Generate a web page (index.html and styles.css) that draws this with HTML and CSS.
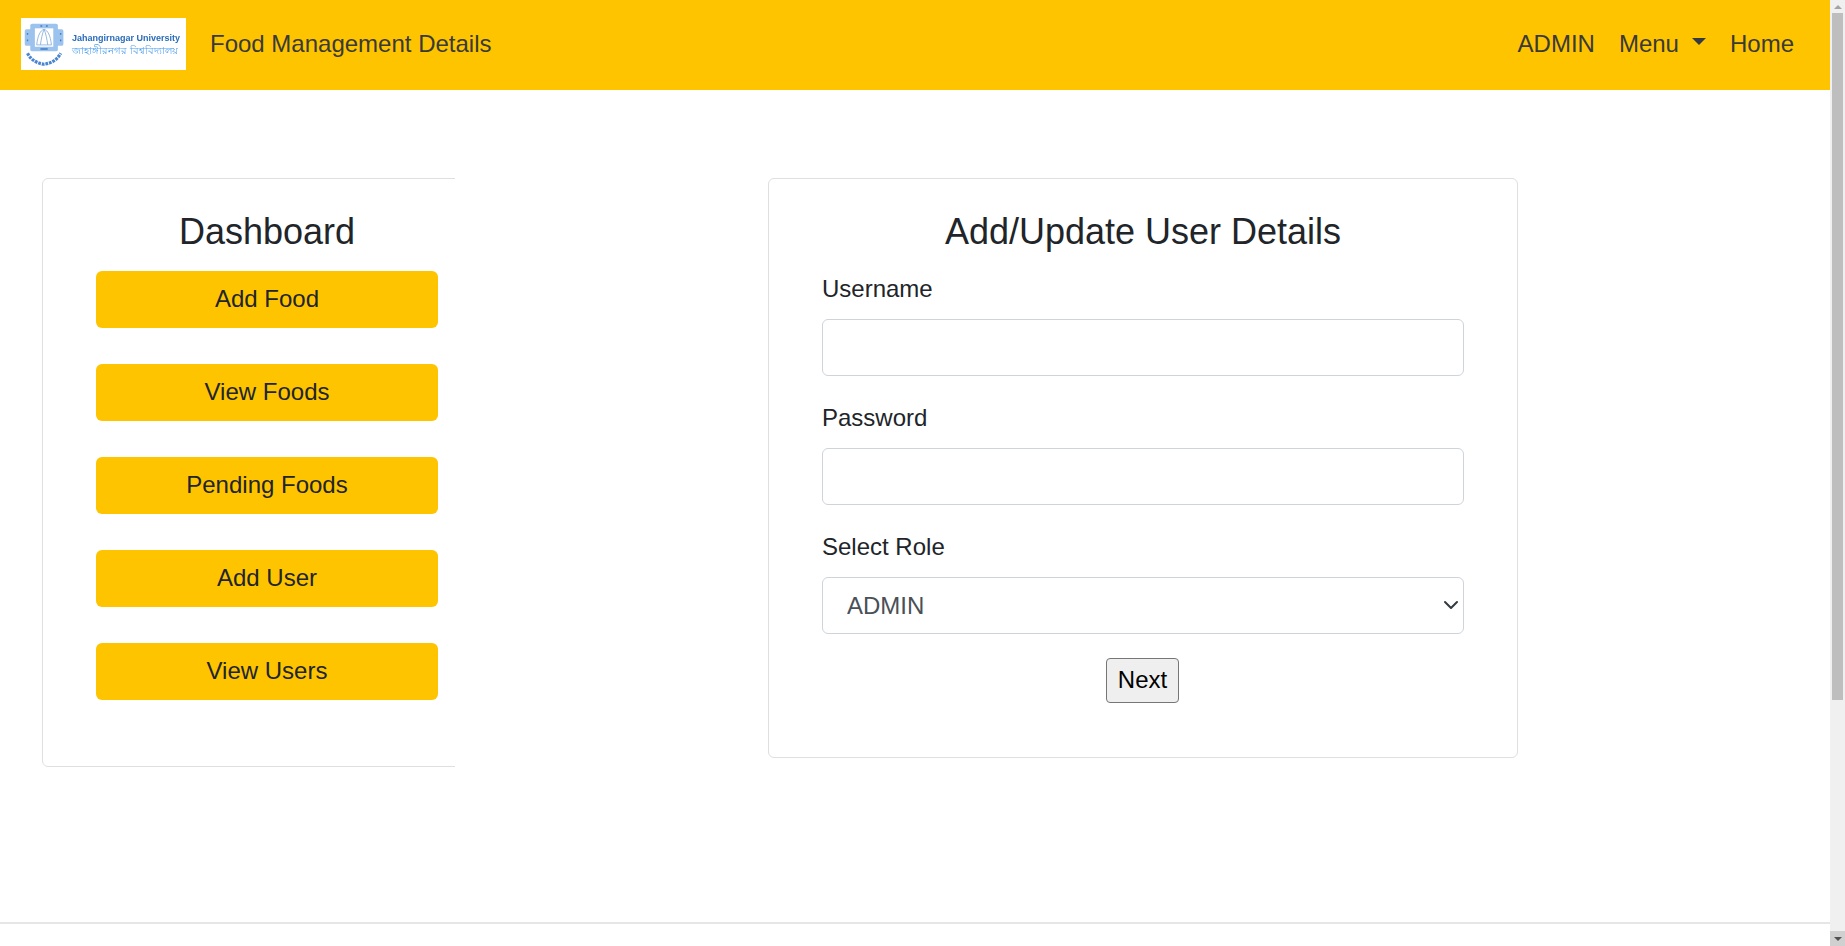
FILE: index.html
```html
<!DOCTYPE html>
<html>
<head>
    <meta charset="utf-8">
    <title>Food Management Details</title>
    <link rel="stylesheet" href="styles.css">
</head>
<body>
    <div class="page">
        <nav class="navbar">
            <div class="logo">
                <svg class="seal" width="46" height="46" viewBox="0 0 50 50">
                    <rect x="9" y="3" width="30" height="30" rx="2" fill="#9cc3ee"/>
                    <rect x="3" y="9" width="42" height="18" rx="2" fill="#9cc3ee"/>
                    <rect x="14" y="8" width="20" height="20" fill="#fff"/>
                    <path d="M16 26 C17 16 20 10 24 9 C28 10 31 16 32 26 M20 26 C21 19 22 14 24 9 C26 14 27 19 28 26 M16 26 H32" fill="none" stroke="#8fb3dd" stroke-width="1"/>
                    <path d="M6 13 v2 M6 20 v2 M42 13 v2 M42 20 v2 M20 5.500 h2 M26 5.500 h2 M20 30.500 h8" stroke="#3f7cc8" stroke-width="1.500"/>
                    <path d="M6 35 C10 43 17 46 24 47 C31 46 38 43 42 35" fill="none" stroke="#4a86d0" stroke-width="3.500" stroke-dasharray="3 1"/>
                </svg>
                <div class="logo-text">
                    <span class="logo-en">Jahangirnagar University</span>
                    <span class="logo-bn">জাহাঙ্গীরনগর বিশ্ববিদ্যালয়</span>
                </div>
            </div>
            <a class="brand" href="#">Food Management Details</a>
            <ul class="nav-links">
                <li><a href="#">ADMIN</a></li>
                <li><a href="#" class="dropdown-toggle">Menu</a></li>
                <li><a href="#">Home</a></li>
            </ul>
        </nav>

        <main class="content">
            <div class="sidebar">
                <div class="card side-card">
                    <h2>Dashboard</h2>
                    <a class="side-btn" href="#">Add Food</a>
                    <a class="side-btn" href="#">View Foods</a>
                    <a class="side-btn" href="#">Pending Foods</a>
                    <a class="side-btn" href="#">Add User</a>
                    <a class="side-btn" href="#">View Users</a>
                </div>
            </div>

            <form class="card form-card">
                <h2>Add/Update User Details</h2>
                <label for="username">Username</label>
                <input type="text" id="username" class="field">
                <label for="password">Password</label>
                <input type="password" id="password" class="field">
                <label for="role">Select Role</label>
                <div class="select-wrap">
                    <select id="role" class="field">
                        <option>ADMIN</option>
                    </select>
                    <svg class="chevron" width="16" height="16" viewBox="0 0 16 16">
                        <path d="M2 5l6 6 6-6" fill="none" stroke="#343a40" stroke-width="2" stroke-linecap="round" stroke-linejoin="round"/>
                    </svg>
                </div>
                <div class="form-actions">
                    <button type="button" class="next-btn">Next</button>
                </div>
            </form>
        </main>

        <footer class="footer"></footer>
    </div>

    <div class="scrollbar">
        <div class="scroll-arrow"><span class="arrow-up"></span></div>
        <div class="scroll-track"><div class="scroll-thumb"></div></div>
        <div class="scroll-arrow scroll-arrow-down"><span class="arrow-down"></span></div>
    </div>
</body>
</html>
```

FILE: styles.css
```css
* {
    box-sizing: border-box;
}

html, body {
    height: 100%;
}

body {
    margin: 0;
    display: flex;
    height: 946px;
    overflow: hidden;
    background: white;
    color: #212529;
    font-family: 'Liberation Sans', Arial, sans-serif;
    font-size: 24px;
    line-height: 1.5;
}

.page {
    flex: 1;
    display: flex;
    flex-direction: column;
    min-width: 0;
}

.navbar {
    height: 90px;
    flex-shrink: 0;
    display: flex;
    align-items: center;
    background: #ffc400;
    padding: 0 36px 2px 21px;
}

.logo {
    width: 165px;
    height: 52px;
    margin-right: 24px;
    background: white;
    display: flex;
    align-items: center;
    padding-left: 1px;
    overflow: hidden;
}

.seal {
    flex-shrink: 0;
    filter: blur(0.5px);
}

.logo-text {
    display: flex;
    flex-direction: column;
    margin-left: 4px;
    white-space: nowrap;
    filter: blur(0.4px);
}

.logo-en {
    font-size: 9px;
    line-height: 12px;
    font-weight: bold;
    color: #2a6cb9;
}

.logo-bn {
    font-family: 'Noto Sans', 'Liberation Sans', sans-serif;
    font-size: 10px;
    line-height: 13px;
    color: #4f9fec;
}

.brand {
    color: #3a3a36;
    text-decoration: none;
}

.nav-links {
    display: flex;
    gap: 24px;
    list-style: none;
    margin: 0 0 0 auto;
    padding: 0;
}

.nav-links a {
    color: #3a3a36;
    text-decoration: none;
}

.dropdown-toggle::after {
    content: '';
    display: inline-block;
    margin-left: 13px;
    vertical-align: 7px;
    border-top: 7px solid #343a40;
    border-left: 7px solid transparent;
    border-right: 7px solid transparent;
}

.content {
    flex: 1;
    display: flex;
    align-items: flex-start;
    padding: 88px 0 0 42px;
}

.card {
    background: white;
    border: 1px solid #dfdfdf;
    border-radius: 6px;
    padding: 32px 53px 0;
}

.sidebar {
    width: 413px;
    overflow: hidden;
    flex-shrink: 0;
}

.side-card {
    width: 450px;
    height: 589px;
}

h2 {
    margin: 0 0 18px;
    font-size: 36px;
    font-weight: 400;
    line-height: 42px;
    text-align: center;
}

.side-btn {
    display: block;
    height: 57px;
    margin-bottom: 36px;
    background: #ffc400;
    border-radius: 6px;
    color: #212529;
    font-size: 24px;
    line-height: 55px;
    text-align: center;
    text-decoration: none;
}

.form-card {
    width: 750px;
    height: 580px;
    margin-left: 313px;
}

label {
    display: block;
    height: 36px;
    margin-bottom: 12px;
}

.field {
    display: block;
    width: 100%;
    height: 57px;
    margin-bottom: 24px;
    padding: 0 24px;
    background: white;
    border: 1px solid #ced4da;
    border-radius: 6px;
    color: #495057;
    font-family: inherit;
    font-size: 24px;
}

select.field {
    appearance: none;
    margin-bottom: 0;
}

.select-wrap {
    position: relative;
}

.chevron {
    position: absolute;
    top: 20px;
    right: 5px;
    pointer-events: none;
}

.form-actions {
    display: flex;
    justify-content: center;
    margin-top: 24px;
    padding-right: 1px;
}

.next-btn {
    width: 73px;
    height: 45px;
    padding: 0 0 2px;
    background: #efefef;
    border: 1px solid #767676;
    border-radius: 4px;
    color: black;
    font-family: inherit;
    font-size: 24px;
}

.footer {
    height: 24px;
    flex-shrink: 0;
    border-top: 2px solid #e6e6e6;
}

.scrollbar {
    width: 15px;
    flex-shrink: 0;
    display: flex;
    flex-direction: column;
    background: #f0f0f0;
}

.scroll-arrow {
    height: 13px;
    display: flex;
    align-items: center;
    justify-content: center;
}

.scroll-arrow-down {
    height: 15px;
    background: #d0d0d0;
}

.arrow-up {
    border-bottom: 4px solid #a3a3a3;
    border-left: 4px solid transparent;
    border-right: 4px solid transparent;
}

.arrow-down {
    border-top: 4px solid #505050;
    border-left: 4px solid transparent;
    border-right: 4px solid transparent;
}

.scroll-track {
    flex: 1;
    padding: 0 2px;
}

.scroll-thumb {
    height: 687px;
    background: #bebebe;
}
```
